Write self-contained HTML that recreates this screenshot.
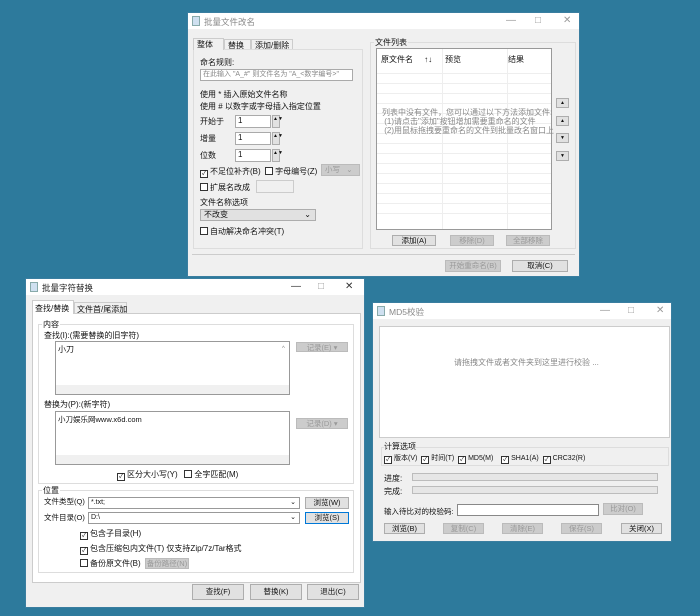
<!DOCTYPE html><html><head><meta charset="utf-8"><style>
*{box-sizing:border-box;margin:0;padding:0}
body{width:700px;height:616px;background:#2d7a9c;position:relative;overflow:hidden;font-family:"Liberation Sans","Noto Sans CJK SC",sans-serif;font-size:8px;color:#111}
.w{position:absolute;background:#f0f0f0;border:1px solid #3a7ea0}
.tb{position:absolute;left:0;top:0;right:0;height:16px;background:#fff}
.tt{position:absolute;left:16px;top:3px;color:#888;font-size:8.5px}
.ic{position:absolute;left:4px;top:3px;width:8px;height:10px;background:#cfe0f0;border:1px solid #8aa}
.ctl{position:absolute;top:2px;color:#999;font-size:10px}
.a{position:absolute;white-space:nowrap}
.box{position:absolute;background:#fff;border:1px solid #aaa}
.btn{position:absolute;background:#e1e1e1;border:1px solid #adadad;text-align:center;line-height:9px;font-size:7.5px}
.dis{color:#999;background:#ccc;border-color:#bbb}
.grp{position:absolute;border:1px solid #ddd}
.cb{display:inline-block;width:8px;height:8px;border:1px solid #333;background:#fff;vertical-align:-1px;margin-right:2px;font-size:6px;line-height:6px;text-align:center}
.g{color:#888}
.line{position:absolute;left:0;right:0;height:1px;background:#eee}
</style></head><body>

<!-- Window 1 -->
<div class="w" style="left:187px;top:12px;width:393px;height:265px">
<div class="tb"><div class="ic"></div><div class="tt">批量文件改名</div><div class="ctl" style="left:318px">—</div><div class="ctl" style="left:347px">□</div><div class="ctl" style="left:375px">✕</div></div>
<div class="a" style="left:5px;top:25px;width:31px;height:12px;background:#f0f0f0;border:1px solid #ccc;border-bottom:none;padding:0 3px;z-index:2">整体</div>
<div class="a" style="left:36px;top:26px;width:27px;height:11px;border:1px solid #ccc;padding:0 3px">替换</div>
<div class="a" style="left:63px;top:26px;width:42px;height:11px;border:1px solid #ccc;padding:0 3px">添加/删除</div>
<div class="a" style="left:5px;top:36px;width:170px;height:200px;background:#f0f0f0;border:1px solid #ddd"></div>
<div class="a" style="left:12px;top:44px">命名规则:</div>
<div class="box" style="left:12px;top:56px;width:153px;height:12px;padding-left:2px;color:#888;font-size:7px;line-height:10px">在此输入 "A_#" 则文件名为 "A_&lt;数字编号&gt;"</div>
<div class="a" style="left:12px;top:76px">使用 * 插入原始文件名称</div>
<div class="a" style="left:12px;top:88px">使用 # 以数字或字母插入指定位置</div>
<div class="a" style="left:12px;top:103px">开始于</div><div class="box" style="left:47px;top:102px;width:36px;height:13px;padding-left:2px">1</div><div class="btn" style="left:84px;top:102px;width:8px;height:13px;font-size:5px;line-height:6px">▲▼</div>
<div class="a" style="left:12px;top:120px">增量</div><div class="box" style="left:47px;top:119px;width:36px;height:13px;padding-left:2px">1</div><div class="btn" style="left:84px;top:119px;width:8px;height:13px;font-size:5px;line-height:6px">▲▼</div>
<div class="a" style="left:12px;top:137px">位数</div><div class="box" style="left:47px;top:136px;width:36px;height:13px;padding-left:2px">1</div><div class="btn" style="left:84px;top:136px;width:8px;height:13px;font-size:5px;line-height:6px">▲▼</div>
<div class="a" style="left:12px;top:153px"><span class="cb">✓</span>不足位补齐(B) &nbsp;<span class="cb"></span>字母编号(Z)</div>
<div class="btn dis" style="left:133px;top:151px;width:39px;height:12px;text-align:left;padding-left:3px;line-height:10px">小写 &nbsp; ⌄</div>
<div class="a" style="left:12px;top:169px"><span class="cb"></span>扩展名改成</div>
<div class="a" style="left:68px;top:167px;width:38px;height:13px;border:1px solid #ccc"></div>
<div class="a" style="left:12px;top:184px">文件名称选项</div>
<div class="btn" style="left:12px;top:196px;width:116px;height:12px;text-align:left;padding-left:3px;line-height:10px;font-size:8px">不改变<span style="float:right;padding-right:4px">⌄</span></div>
<div class="a" style="left:12px;top:213px"><span class="cb"></span>自动解决命名冲突(T)</div>
<div class="grp" style="left:182px;top:29px;width:206px;height:207px"></div>
<div class="a" style="left:186px;top:24px;background:#f0f0f0;padding:0 1px">文件列表</div>
<div class="box" style="left:188px;top:35px;width:176px;height:182px;border-color:#999">
<div class="a" style="left:4px;top:5px">原文件名 &nbsp; &nbsp; ↑↓</div><div class="a" style="left:68px;top:5px">预览</div><div class="a" style="left:131px;top:5px">结果</div>
<div class="a" style="left:65px;top:0;width:1px;height:180px;background:#eee"></div><div class="a" style="left:130px;top:0;width:1px;height:180px;background:#eee"></div>
<div class="line" style="top:24px"></div><div class="line" style="top:34px"></div><div class="line" style="top:44px"></div><div class="line" style="top:54px"></div><div class="line" style="top:64px"></div><div class="line" style="top:74px"></div><div class="line" style="top:84px"></div><div class="line" style="top:94px"></div><div class="line" style="top:104px"></div><div class="line" style="top:114px"></div><div class="line" style="top:124px"></div><div class="line" style="top:134px"></div><div class="line" style="top:144px"></div><div class="line" style="top:154px"></div><div class="line" style="top:164px"></div>
<div class="a g" style="left:5px;top:59px;line-height:9px">列表中没有文件，您可以通过以下方法添加文件:<br>&nbsp;(1)请点击"添加"按钮增加需要重命名的文件<br>&nbsp;(2)用鼠标拖拽要重命名的文件到批量改名窗口上</div>
</div>
<div class="btn" style="left:368px;top:85px;width:13px;height:10px;font-size:5px">▲</div>
<div class="btn" style="left:368px;top:103px;width:13px;height:10px;font-size:5px">▲</div>
<div class="btn" style="left:368px;top:120px;width:13px;height:10px;font-size:5px">▼</div>
<div class="btn" style="left:368px;top:138px;width:13px;height:10px;font-size:5px">▼</div>
<div class="btn" style="left:204px;top:222px;width:44px;height:11px">添加(A)</div>
<div class="btn dis" style="left:262px;top:222px;width:44px;height:11px">移除(D)</div>
<div class="btn dis" style="left:318px;top:222px;width:44px;height:11px">全部移除</div>
<div class="a" style="left:4px;top:241px;width:383px;height:1px;background:#ccc"></div>
<div class="btn dis" style="left:257px;top:247px;width:56px;height:12px">开始重命名(B)</div>
<div class="btn" style="left:324px;top:247px;width:56px;height:12px">取消(C)</div>
</div>

<!-- Window 2 -->
<div class="w" style="left:25px;top:278px;width:340px;height:330px">
<div class="tb"><div class="ic"></div><div class="tt" style="color:#222">批量字符替换</div><div class="ctl" style="left:265px;color:#333">—</div><div class="ctl" style="left:292px">□</div><div class="ctl" style="left:319px;color:#333">✕</div></div>
<div class="a" style="left:6px;top:21px;width:42px;height:14px;background:#fff;border:1px solid #ccc;border-bottom:none;padding:2px 2px;z-index:2">查找/替换</div>
<div class="a" style="left:48px;top:23px;width:53px;height:12px;border:1px solid #ccc;padding:1px 2px">文件首/尾添加</div>
<div class="a" style="left:6px;top:34px;width:329px;height:270px;background:#fff;border:1px solid #ccc"></div>
<div class="grp" style="left:12px;top:45px;width:316px;height:160px"></div>
<div class="a" style="left:16px;top:40px;background:#fff;padding:0 1px">内容</div>
<div class="a" style="left:18px;top:51px">查找(I):(需要替换的旧字符)</div>
<div class="box" style="left:29px;top:62px;width:235px;height:54px;border-color:#999;padding:2px"><span>小刀</span><div class="a g" style="left:226px;top:4px;font-size:6px">^</div><div class="a" style="left:0;bottom:0;width:233px;height:9px;background:#f0f0f0"></div></div>
<div class="btn dis" style="left:270px;top:63px;width:52px;height:10px">记录(E) ▾</div>
<div class="a" style="left:18px;top:120px">替换为(P):(新字符)</div>
<div class="box" style="left:29px;top:132px;width:235px;height:54px;border-color:#999;padding:2px;font-size:7.5px">小刀娱乐网www.x6d.com<div class="a" style="left:0;bottom:0;width:233px;height:9px;background:#f0f0f0"></div></div>
<div class="btn dis" style="left:270px;top:139px;width:52px;height:11px">记录(D) ▾</div>
<div class="a" style="left:91px;top:190px"><span class="cb">✓</span>区分大小写(Y) &nbsp; <span class="cb"></span>全字匹配(M)</div>
<div class="grp" style="left:12px;top:211px;width:316px;height:83px"></div>
<div class="a" style="left:16px;top:206px;background:#fff;padding:0 1px">位置</div>
<div class="a" style="left:18px;top:217px;font-size:7.5px">文件类型(Q)</div>
<div class="box" style="left:62px;top:218px;width:212px;height:12px;border-color:#999;padding-left:2px;font-size:7px;line-height:10px">*.txt;<span style="float:right;padding-right:3px">⌄</span></div>
<div class="btn" style="left:279px;top:218px;width:44px;height:12px">浏览(W)</div>
<div class="a" style="left:18px;top:233px;font-size:7.5px">文件目录(O)</div>
<div class="box" style="left:62px;top:233px;width:212px;height:12px;border-color:#999;padding-left:2px;font-size:7px;line-height:10px">D:\<span style="float:right;padding-right:3px">⌄</span></div>
<div class="btn" style="left:279px;top:233px;width:44px;height:12px;border-color:#0078d7">浏览(S)</div>
<div class="a" style="left:54px;top:249px"><span class="cb">✓</span>包含子目录(H)</div>
<div class="a" style="left:54px;top:264px"><span class="cb">✓</span>包含压缩包内文件(T) 仅支持Zip/7z/Tar格式</div>
<div class="a" style="left:54px;top:279px"><span class="cb"></span>备份原文件(B)</div>
<div class="btn dis" style="left:119px;top:279px;width:44px;height:11px">备份路径(N)</div>
<div class="btn" style="left:166px;top:305px;width:52px;height:16px;line-height:14px">查找(F)</div>
<div class="btn" style="left:224px;top:305px;width:52px;height:16px;line-height:14px">替换(K)</div>
<div class="btn" style="left:281px;top:305px;width:52px;height:16px;line-height:14px">退出(C)</div>
</div>

<!-- Window 3 -->
<div class="w" style="left:372px;top:302px;width:300px;height:240px">
<div class="tb"><div class="ic"></div><div class="tt">MD5校验</div><div class="ctl" style="left:227px">—</div><div class="ctl" style="left:255px">□</div><div class="ctl" style="left:283px">✕</div></div>
<div class="box" style="left:6px;top:23px;width:291px;height:112px;border-color:#ccc"><div class="a g" style="left:74px;top:30px">请拖拽文件或者文件夹到这里进行校验 ...</div></div>
<div class="grp" style="left:8px;top:144px;width:288px;height:19px"></div>
<div class="a" style="left:11px;top:138px;background:#f0f0f0">计算选项</div>
<div class="a" style="left:11px;top:150px;font-size:7px"><span class="cb">✓</span>版本(V) &nbsp;<span class="cb">✓</span>时间(T) &nbsp;<span class="cb">✓</span>MD5(M) &nbsp; &nbsp;<span class="cb">✓</span>SHA1(A) &nbsp;<span class="cb">✓</span>CRC32(R)</div>
<div class="a" style="left:11px;top:170px">进度:</div><div class="a" style="left:39px;top:170px;width:246px;height:8px;background:#e6e6e6;border:1px solid #bcbcbc"></div>
<div class="a" style="left:11px;top:183px">完成:</div><div class="a" style="left:39px;top:183px;width:246px;height:8px;background:#e6e6e6;border:1px solid #bcbcbc"></div>
<div class="a" style="left:11px;top:203px;font-size:7.5px">输入待比对的校验码:</div>
<div class="box" style="left:84px;top:201px;width:142px;height:12px;border-color:#888"></div>
<div class="btn dis" style="left:230px;top:200px;width:40px;height:12px">比对(O)</div>
<div class="btn" style="left:11px;top:220px;width:41px;height:11px">浏览(B)</div>
<div class="btn dis" style="left:70px;top:220px;width:41px;height:11px">复制(C)</div>
<div class="btn dis" style="left:129px;top:220px;width:41px;height:11px">清除(E)</div>
<div class="btn dis" style="left:188px;top:220px;width:41px;height:11px">保存(S)</div>
<div class="btn" style="left:248px;top:220px;width:41px;height:11px">关闭(X)</div>
</div>
</body></html>
